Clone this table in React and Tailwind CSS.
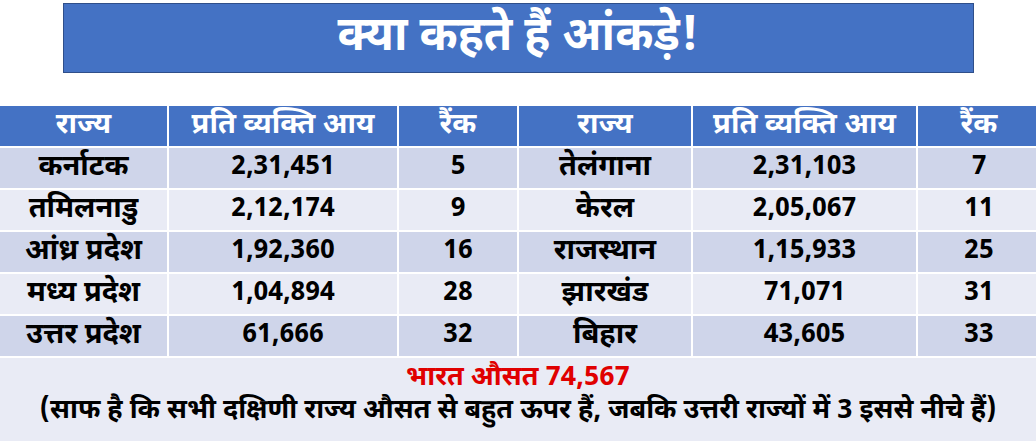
const rows = [
  ["कर्नाटक", "2,31,451", "5", "तेलंगाना", "2,31,103", "7"],
  ["तमिलनाडु", "2,12,174", "9", "केरल", "2,05,067", "11"],
  ["आंध्र प्रदेश", "1,92,360", "16", "राजस्थान", "1,15,933", "25"],
  ["मध्य प्रदेश", "1,04,894", "28", "झारखंड", "71,071", "31"],
  ["उत्तर प्रदेश", "61,666", "32", "बिहार", "43,605", "33"],
];

const heads = ["राज्य", "प्रति व्यक्ति आय", "रैंक", "राज्य", "प्रति व्यक्ति आय", "रैंक"];

const font = { fontFamily: '"Noto Sans Devanagari", "Open Sans", "Noto Sans", sans-serif' };

export default function App() {
  return (
    <div className="w-[1036px] h-[441px] bg-white overflow-hidden" style={font}>
      <div className="pt-[3px] flex justify-center">
        <div className="w-[911px] h-[70px] bg-[#4472c4] border border-[#2f4f8a] flex items-center justify-center">
          <span className="text-white font-bold text-[48px] leading-none scale-x-[0.96] pt-[2px]">क्या कहते हैं आंकड़े!</span>
        </div>
      </div>

      <div className="mt-[33px] grid grid-cols-[167px_228px_118px_172px_223px_122px] gap-[2px] bg-white">
        {heads.map((h, i) => (
          <div key={i} className="h-[40px] bg-[#4472c4] text-white font-bold text-[29px] flex items-center justify-center leading-none">
            {h}
          </div>
        ))}
        {rows.map((r, ri) =>
          r.map((c, ci) => (
            <div
              key={ri + "-" + ci}
              className={
                "h-[40px] flex items-center justify-center font-bold leading-none text-black " +
                (ci % 3 === 0 ? "text-[29px] " : "text-[26px] ") +
                (ri % 2 === 0 ? "bg-[#cfd5ea]" : "bg-[#e9ebf5]")
              }
            >
              {c}
            </div>
          ))
        )}
      </div>

      <div className="mt-[2px] h-[83px] bg-[#e9ebf5] flex flex-col items-center pt-[6px]">
        <div className="text-[#e00000] font-bold text-[27px] leading-[30px]">भारत औसत 74,567</div>
        <div className="mt-[2px] text-black font-bold text-[27px] leading-[32px] whitespace-nowrap">
          (साफ है कि सभी दक्षिणी राज्य औसत से बहुत ऊपर हैं, जबकि उत्तरी राज्यों में 3 इससे नीचे हैं)
        </div>
      </div>
    </div>
  );
}
